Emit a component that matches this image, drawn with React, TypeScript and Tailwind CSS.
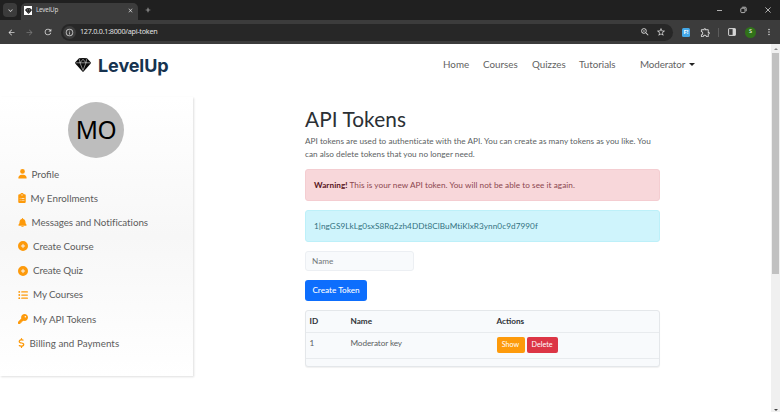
import type { ReactNode } from 'react';
import { FaUser, FaClipboardList, FaBell, FaCirclePlus, FaListUl, FaKey, FaDollarSign } from 'react-icons/fa6';
import { MdArrowBack, MdArrowForward, MdRefresh, MdInfoOutline, MdStarBorder, MdZoomIn, MdOutlineExtension, MdMoreVert, MdClose, MdAdd, MdKeyboardArrowDown } from 'react-icons/md';

const menu: { icon: ReactNode; label: string; text: string }[] = [
  { icon: <FaUser className="h-[9.5px] w-[9px]" />, label: 'Profile', text: 'ml-[4.5px]' },
  { icon: <FaClipboardList className="h-[10px] w-[8px]" />, label: 'My Enrollments', text: 'ml-[4.5px] tracking-[0.02px]' },
  { icon: <FaBell className="h-[9.5px] w-[9px]" />, label: 'Messages and Notifications', text: 'ml-[4.5px] tracking-[-0.05px]' },
  { icon: <FaCirclePlus className="h-[10px] w-[10px]" />, label: 'Create Course', text: 'ml-[5px] tracking-[-0.06px]' },
  { icon: <FaCirclePlus className="h-[10px] w-[10px]" />, label: 'Create Quiz', text: 'ml-[5px] tracking-[-0.1px]' },
  { icon: <FaListUl className="h-[10px] w-[10px]" />, label: 'My Courses', text: 'ml-[5px] tracking-[-0.1px]' },
  { icon: <FaKey className="h-[10px] w-[10px]" />, label: 'My API Tokens', text: 'ml-[5px]' },
  { icon: <FaDollarSign className="h-[10px] w-[7px]" />, label: 'Billing and Payments', text: 'ml-[4.5px] tracking-[0.04px]' },
];

function Diamond({ className }: { className: string }) {
  return (
    <svg className={className} viewBox="0 0 16 14">
      <path d="M4 .3Q8-.3 12 .3L15.7 4.2Q16 5 15.3 6L8.6 13.5Q8 14 7.4 13.5L.7 6Q0 5 .3 4.2Z" fill="#0a0a0a" />
      <path d="M1 4.8h14M4.4 1.2 5 4.8 8 12.4 11 4.8l.6-3.6M5 4.8 8 1.2l3 3.6" fill="none" stroke="#fff" strokeWidth=".5" />
    </svg>
  );
}

function Browser() {
  return (
    <header className="h-11 shrink-0 bg-[#3c3c3c] font-[family-name:'Noto_Sans',sans-serif] text-[#d6d6d6]">
      <div className="flex h-5 items-start bg-[#202020]">
        <div className="ml-[3px] mt-[3px] flex h-[14px] w-[14px] items-center justify-center rounded-[4px] bg-[#3b3b3b]">
          <MdKeyboardArrowDown className="h-[9px] w-[9px]" />
        </div>
        <div className="ml-[4px] mt-[3px] flex h-[17px] w-[117px] items-center rounded-t-[5px] bg-[#3c3c3c] pl-[3px]">
          <div className="-mt-[2px] flex h-[9px] w-[8px] items-center justify-center bg-white">
            <Diamond className="h-[6px] w-[7px]" />
          </div>
          <span className="-mt-[2px] ml-[4px] text-[6.3px] leading-none tracking-[-0.2px]">LevelUp</span>
          <MdClose className="-mt-[2px] ml-auto mr-[4px] h-[7px] w-[7px]" />
        </div>
        <MdAdd className="ml-[6px] mt-[6px] h-[8px] w-[8px]" />
        <div className="ml-auto mr-[8px] mt-[6px] flex items-center">
          <svg className="mr-[17px] h-[8px] w-[7px]" viewBox="0 0 7 8" stroke="currentColor"><path d="M1 4.5h5" strokeWidth=".8" /></svg>
          <svg className="mr-[17px] h-[8px] w-[7px]" viewBox="0 0 7 8" fill="none" stroke="currentColor" strokeWidth=".8"><rect x=".8" y="2.2" width="4.2" height="4.4" rx=".8" /><path d="M2.2 1.2h3q1 0 1 1v3" /></svg>
          <svg className="h-[8px] w-[8px]" viewBox="0 0 8 8" fill="none" stroke="currentColor" strokeWidth=".8"><path d="m1.4 1.4 5.2 5.2m0-5.2L1.4 6.6" /></svg>
        </div>
      </div>
      <div className="flex h-6 items-center">
        <MdArrowBack className="ml-[7px] h-[9px] w-[9px]" />
        <MdArrowForward className="ml-[9px] h-[9px] w-[9px] text-[#757575]" />
        <MdRefresh className="ml-[9px] h-[10px] w-[10px]" />
        <div className="ml-[8px] flex h-[17px] w-[612px] items-center rounded-full bg-[#272727] pl-[2px] pr-[7px]">
          <div className="flex h-[13px] w-[13px] items-center justify-center rounded-full bg-[#3b3b3b]">
            <MdInfoOutline className="h-[9px] w-[9px]" />
          </div>
          <span className="ml-[4px] text-[7.2px] leading-none tracking-[-0.25px] text-[#e0e0e0]">127.0.0.1:8000/api-token</span>
          <MdZoomIn className="ml-auto h-[10px] w-[10px]" />
          <MdStarBorder className="ml-[6px] h-[10px] w-[10px]" />
        </div>
        <div className="ml-[9px] flex h-[9px] w-[8px] items-center justify-center rounded-[1.5px] bg-[#44a8e8] text-[6px] font-bold leading-none text-white">F!</div>
        <MdOutlineExtension className="ml-[10px] h-[11px] w-[11px]" />
        <div className="ml-[7px] h-[9px] w-px bg-[#5c5c5c]" />
        <svg className="ml-[9px] h-[8px] w-[8px]" viewBox="0 0 8 8"><rect x=".6" y=".6" width="6.8" height="6.8" rx=".5" fill="none" stroke="currentColor" /><path d="M4.6.6h2.8v6.8H4.6z" fill="currentColor" /></svg>
        <div className="ml-[9px] flex h-[11px] w-[11px] items-center justify-center rounded-full bg-[#31731a] text-[5.5px] leading-none text-white">S</div>
        <MdMoreVert className="ml-[8px] h-[10px] w-[10px]" />
      </div>
    </header>
  );
}

function Sidebar() {
  return (
    <aside className="flex h-[279px] w-[193px] flex-col bg-linear-to-b from-white via-[#f7f7f7] to-white shadow-[1px_1px_2px_rgba(0,0,0,0.13)]">
      <div className="ml-[68px] mt-[5px] flex h-[56px] w-[56px] items-center justify-center rounded-full bg-[#bdbdbd] font-[family-name:'Noto_Sans',sans-serif] text-[24.5px] leading-none tracking-[-0.5px] text-black">MO</div>
      <nav className="mt-[4px] pl-[18px]">
        {menu.map((m) => (
          <a key={m.label} className="flex h-[24.15px] items-center text-[9.8px] text-[#5c5c5c]">
            <span className="text-[#fd9a0b]">{m.icon}</span>
            <span className={`whitespace-nowrap ${m.text}`}>{m.label}</span>
          </a>
        ))}
      </nav>
    </aside>
  );
}

function Content() {
  return (
    <main className="ml-[112px] w-[355px] pt-[9px] text-[8.2px] text-[#5b5f63]">
      <h1 className="whitespace-nowrap text-[20.8px] font-normal leading-[25px] tracking-[0.08px] text-[#2b3035]">API Tokens</h1>
      <p className="mt-[4px] whitespace-nowrap leading-[13px] tracking-[0.02px]">API tokens are used to authenticate with the API. You can create as many tokens as you like. You<br />can also delete tokens that you no longer need.</p>
      <div className="mt-[8px] flex h-[32px] items-center whitespace-pre rounded-[3px] border border-[#f4cdd1] bg-[#f8d7da] pl-[8px] tracking-[0.05px] text-[#8c4750]"><b className="font-bold text-[#58151c]">Warning!</b> This is your new API token. You will not be able to see it again.</div>
      <div className="mt-[9px] flex h-[32px] items-center rounded-[3px] border border-[#bdf0f9] bg-[#cff4fc] pl-[8px] tracking-[0.07px] text-[#33727f]">1|ngGS9LkLg0sxS8Rq2zh4DDt8ClBuMtiKlxR3ynn0c9d7990f</div>
      <input placeholder="Name" className="mt-[9px] block h-[20px] w-[109px] rounded-[3px] border border-[#eceff3] bg-[#f8fafc] px-[6px] text-[8.2px] placeholder:text-[#73777b]" />
      <button className="mt-[9px] block h-[21px] w-[62px] whitespace-nowrap rounded-[3px] bg-[#0d6efd] text-[8.2px] font-medium text-white">Create Token</button>
      <div className="mt-[9px] h-[57px] overflow-hidden rounded-[3px] border border-[#e4e7ea] bg-[#f8fafc] shadow-[0_1px_1px_rgba(0,0,0,0.06)]">
        <div className="grid h-[22px] grid-cols-[41px_146px_1fr] items-center border-b border-[#e8ebee] pl-[3.5px] font-bold text-[#2f3337]">
          <span>ID</span><span>Name</span><span>Actions</span>
        </div>
        <div className="grid h-[26px] grid-cols-[41px_146px_1fr] items-center border-b border-[#e8ebee] pl-[3.5px]">
          <span className="-mt-[4px]">1</span><span className="-mt-[4px] tracking-[-0.1px]">Moderator key</span>
          <span className="-mt-px flex gap-[2px] text-[7.2px] text-white">
            <button className="h-[16px] w-[28px] rounded-[2px] bg-[#fd9a0b]">Show</button>
            <button className="h-[16px] w-[31px] rounded-[2px] bg-[#dc3545]">Delete</button>
          </span>
        </div>
      </div>
    </main>
  );
}

export default function App() {
  return (
    <div className="flex h-[412px] w-[780px] flex-col overflow-hidden bg-white font-[family-name:Lato,sans-serif]">
      <Browser />
      <div className="flex h-[368px]">
        <div className="w-[771px]">
          <div className="flex h-[53px] items-start pl-[75px] pt-[11px] text-[#626262]">
            <Diamond className="mt-[3px] h-[14px] w-[16px]" />
            <span className="ml-[7px] w-[73px] whitespace-nowrap font-[family-name:Inter,sans-serif] text-[18px] font-bold leading-[22px] tracking-[-0.1px] text-[#16334f]">LevelUp</span>
            <nav className="ml-[272px] flex h-[19px] items-center whitespace-nowrap text-[9.8px]">
              <a className="w-[40px]">Home</a><a className="w-[49px]">Courses</a><a className="w-[47px]">Quizzes</a><a className="w-[61px]">Tutorials</a><a className="w-[49px] tracking-[-0.1px]">Moderator</a>
              <span className="border-x-[3px] border-t-[3px] border-x-transparent border-t-[#222]" />
            </nav>
          </div>
          <div className="flex"><Sidebar /><Content /></div>
        </div>
        <div className="flex w-[9px] flex-col items-center justify-between bg-[#f0f0f0]">
          <span className="mt-[4px] border-x-2 border-b-2 border-x-transparent border-b-[#8a8a8a]" />
          <div className="mb-auto mt-[3px] h-[221px] w-[7px] bg-[#c1c1c1]" />
          <span className="mb-[1px] border-x-2 border-t-2 border-x-transparent border-t-[#444]" />
        </div>
      </div>
    </div>
  );
}
